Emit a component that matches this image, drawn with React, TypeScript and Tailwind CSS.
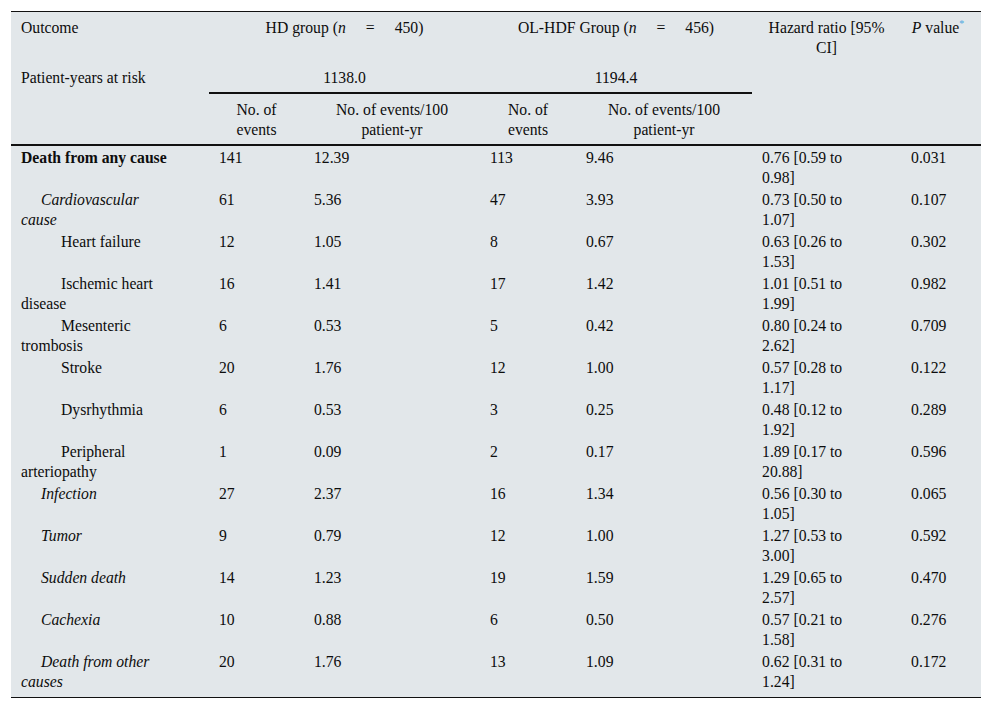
const rows: { label: string; level: 0 | 1 | 2; hdN: string; hdR: string; olN: string; olR: string; hr: string; p: string }[] = [
  { label: "Death from any cause", level: 0, hdN: "141", hdR: "12.39", olN: "113", olR: "9.46", hr: "0.76 [0.59 to 0.98]", p: "0.031" },
  { label: "Cardiovascular cause", level: 1, hdN: "61", hdR: "5.36", olN: "47", olR: "3.93", hr: "0.73 [0.50 to 1.07]", p: "0.107" },
  { label: "Heart failure", level: 2, hdN: "12", hdR: "1.05", olN: "8", olR: "0.67", hr: "0.63 [0.26 to 1.53]", p: "0.302" },
  { label: "Ischemic heart disease", level: 2, hdN: "16", hdR: "1.41", olN: "17", olR: "1.42", hr: "1.01 [0.51 to 1.99]", p: "0.982" },
  { label: "Mesenteric trombosis", level: 2, hdN: "6", hdR: "0.53", olN: "5", olR: "0.42", hr: "0.80 [0.24 to 2.62]", p: "0.709" },
  { label: "Stroke", level: 2, hdN: "20", hdR: "1.76", olN: "12", olR: "1.00", hr: "0.57 [0.28 to 1.17]", p: "0.122" },
  { label: "Dysrhythmia", level: 2, hdN: "6", hdR: "0.53", olN: "3", olR: "0.25", hr: "0.48 [0.12 to 1.92]", p: "0.289" },
  { label: "Peripheral arteriopathy", level: 2, hdN: "1", hdR: "0.09", olN: "2", olR: "0.17", hr: "1.89 [0.17 to 20.88]", p: "0.596" },
  { label: "Infection", level: 1, hdN: "27", hdR: "2.37", olN: "16", olR: "1.34", hr: "0.56 [0.30 to 1.05]", p: "0.065" },
  { label: "Tumor", level: 1, hdN: "9", hdR: "0.79", olN: "12", olR: "1.00", hr: "1.27 [0.53 to 3.00]", p: "0.592" },
  { label: "Sudden death", level: 1, hdN: "14", hdR: "1.23", olN: "19", olR: "1.59", hr: "1.29 [0.65 to 2.57]", p: "0.470" },
  { label: "Cachexia", level: 1, hdN: "10", hdR: "0.88", olN: "6", olR: "0.50", hr: "0.57 [0.21 to 1.58]", p: "0.276" },
  { label: "Death from other causes", level: 1, hdN: "20", hdR: "1.76", olN: "13", olR: "1.09", hr: "0.62 [0.31 to 1.24]", p: "0.172" },
];

export default function App() {
  const last = rows.length - 1;
  return (
    <div className="pt-[11px] pl-[11px] bg-white min-h-screen">
      <table
        className="w-[970px] table-fixed border-separate border-spacing-0 border-t border-b border-[#111] bg-[#e2e7ea] text-[#0d0d0d] text-[15.7px] leading-[20px]"
        style={{ fontFamily: '"Liberation Serif", "Times New Roman", serif' }}
      >
        <colgroup>
          <col className="w-[198px]" />
          <col className="w-[95px]" />
          <col className="w-[176px]" />
          <col className="w-[96px]" />
          <col className="w-[176px]" />
          <col className="w-[149px]" />
          <col className="w-[80px]" />
        </colgroup>
        <thead>
          <tr>
            <th className="align-top text-left font-normal px-[10px] pt-[6px] pb-[4px]">Outcome</th>
            <th colSpan={2} className="align-top text-center font-normal px-[10px] pt-[6px] pb-[4px]">
              HD group (<i>n</i>
              <span className="mx-[20px]">=</span>450)
            </th>
            <th colSpan={2} className="align-top text-center font-normal px-[10px] pt-[6px] pb-[4px]">
              OL-HDF Group (<i>n</i>
              <span className="mx-[20px]">=</span>456)
            </th>
            <th className="align-top text-center font-normal px-[10px] pt-[6px] pb-[4px]">Hazard ratio [95% CI]</th>
            <th className="align-top text-center font-normal pl-[4px] pr-[10px] pt-[6px] pb-[4px]">
              <i>P</i> value
              <span className="align-super text-[10px] leading-none text-[#4ea8e0]">*</span>
            </th>
          </tr>
          <tr>
            <td className="align-top text-left px-[10px] pt-[6px] pb-[4px]">Patient-years at risk</td>
            <td colSpan={2} className="align-top text-center px-[10px] pt-[6px] pb-[4px] border-b-2 border-[#111]">1138.0</td>
            <td colSpan={2} className="align-top text-center px-[10px] pt-[6px] pb-[4px] border-b-2 border-[#111]">1194.4</td>
            <td className="px-[10px]"></td>
            <td className="px-[10px]"></td>
          </tr>
          <tr>
            <th className="border-b-2 border-[#111] px-[10px]"></th>
            <th className="align-top text-center font-normal px-[10px] pt-[6px] pb-[4px] border-b-2 border-[#111]">No. of events</th>
            <th className="align-top text-center font-normal px-[10px] pt-[6px] pb-[4px] border-b-2 border-[#111]">No. of events/100 patient-yr</th>
            <th className="align-top text-center font-normal px-[10px] pt-[6px] pb-[4px] border-b-2 border-[#111]">No. of events</th>
            <th className="align-top text-center font-normal px-[10px] pt-[6px] pb-[4px] border-b-2 border-[#111]">No. of events/100 patient-yr</th>
            <th className="border-b-2 border-[#111] px-[10px]"></th>
            <th className="border-b-2 border-[#111] px-[10px]"></th>
          </tr>
        </thead>
        <tbody>
          {rows.map((r, i) => {
            const pad = i === last ? "pt-[2px] pb-[5px]" : "pt-[2px] pb-0";
            const labelStyle =
              r.level === 0 ? "font-bold" : r.level === 1 ? "italic indent-[20px]" : "indent-[40px]";
            return (
              <tr key={r.label}>
                <td className={`align-top text-left pl-[10px] pr-[34px] ${pad} ${labelStyle}`}>{r.label}</td>
                <td className={`align-top text-left px-[10px] ${pad}`}>{r.hdN}</td>
                <td className={`align-top text-left px-[10px] ${pad}`}>{r.hdR}</td>
                <td className={`align-top text-left px-[10px] ${pad}`}>{r.olN}</td>
                <td className={`align-top text-left px-[10px] ${pad}`}>{r.olR}</td>
                <td className={`align-top text-left pl-[10px] pr-[39px] ${pad}`}>{r.hr}</td>
                <td className={`align-top text-left px-[10px] ${pad}`}>{r.p}</td>
              </tr>
            );
          })}
        </tbody>
      </table>
    </div>
  );
}
